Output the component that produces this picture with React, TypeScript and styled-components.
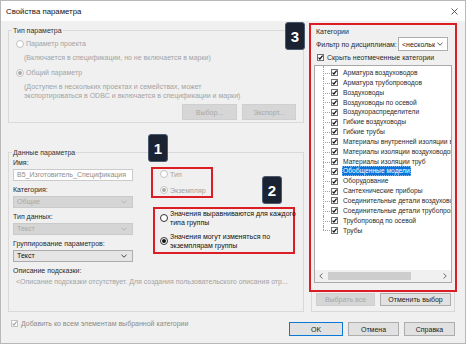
import React from "react";
import styled, { createGlobalStyle, css } from "styled-components";

const RED = "#dc1d25";
const DISABLED = "#a3a3a3";

const categories = [
  "Арматура воздуховодов",
  "Арматура трубопроводов",
  "Воздуховоды",
  "Воздуховоды по осевой",
  "Воздухораспределители",
  "Гибкие воздуховоды",
  "Гибкие трубы",
  "Материалы внутренней изоляции воздуховодов",
  "Материалы изоляции воздуховодов",
  "Материалы изоляции труб",
  "Обобщенные модели",
  "Оборудование",
  "Сантехнические приборы",
  "Соединительные детали воздуховодов",
  "Соединительные детали трубопроводов",
  "Трубопровод по осевой",
  "Трубы",
];
const selectedCategory = "Обобщенные модели";

const GlobalStyle = createGlobalStyle`
  html, body {
    margin: 0;
    padding: 0;
    background: #fff;
  }
  body {
    font-family: "Liberation Sans", Arial, sans-serif;
  }
  * {
    box-sizing: border-box;
  }
`;

function Chevron({ color = "#555" }: { color?: string }) {
  return (
    <svg width="6" height="4" viewBox="0 0 6 4">
      <path d="M0.5 0.8 L3 3.2 L5.5 0.8" fill="none" stroke={color} strokeWidth="0.9" />
    </svg>
  );
}

function CheckBox({ disabled }: { disabled?: boolean }) {
  return (
    <svg width="7" height="7" viewBox="0 0 7 7" style={{ flex: "none" }}>
      <rect x="0.5" y="0.5" width="6" height="6" fill="#fff" stroke={disabled ? "#c4c4c4" : "#707070"} />
      <path
        d="M1.5 3.6 L2.9 5 L5.6 1.7"
        fill="none"
        stroke={disabled ? "#a8a8a8" : "#111"}
        strokeWidth="1.2"
      />
    </svg>
  );
}

export default function App() {
  return (
    <>
      <GlobalStyle />
      <Dialog>
        <TitleBar>
          <span>Свойства параметра</span>
          <svg width="7" height="7" viewBox="0 0 7 7">
            <path d="M0.5 0.5 L6.5 6.5 M6.5 0.5 L0.5 6.5" stroke="#333" strokeWidth="0.8" />
          </svg>
        </TitleBar>

        <Main>
          <LeftColumn>
            <TypeGroup>
              <Legend>Тип параметра</Legend>
              <RadioRow $disabled $indent={3}>
                <Radio $disabled />
                <span>Параметр проекта</span>
              </RadioRow>
              <Hint $top={5}>(Включается в спецификации, но не включается в марки)</Hint>
              <RadioRow $disabled $indent={3} $top={6}>
                <Radio $disabled $checked />
                <span>Общий параметр</span>
              </RadioRow>
              <Hint $top={5}>
                (Доступен в нескольких проектах и семействах, может
                <br />
                экспортироваться в ODBC и включается в спецификации и марки)
              </Hint>
              <ButtonRow>
                <Button $variant="disabled" $w={55} $h={16}>Выбор...</Button>
                <Button $variant="disabled" $w={54} $h={16}>Экспорт...</Button>
              </ButtonRow>
            </TypeGroup>

            <DataGroup>
              <Legend>Данные параметра</Legend>
              <DataGrid>
                <Fields>
                  <Field>
                    <Label>Имя:</Label>
                    <TextInput>B5_Изготовитель_Спецификация</TextInput>
                  </Field>
                  <Field>
                    <Label>Категория:</Label>
                    <Select $disabled>
                      <span>Общие</span>
                      <Chevron color="#b0b0b0" />
                    </Select>
                  </Field>
                  <Field>
                    <Label>Тип данных:</Label>
                    <Select $disabled>
                      <span>Текст</span>
                      <Chevron color="#b0b0b0" />
                    </Select>
                  </Field>
                  <Field>
                    <Label>Группирование параметров:</Label>
                    <Select>
                      <span>Текст</span>
                      <Chevron color="#333" />
                    </Select>
                  </Field>
                </Fields>

                <Options>
                  <InstanceBox>
                    <Badge $x={-5} $y={-35}>1</Badge>
                    <RadioRow $disabled>
                      <Radio $disabled />
                      <span>Тип</span>
                    </RadioRow>
                    <RadioRow $disabled $top={7}>
                      <Radio $disabled $checked />
                      <span>Экземпляр</span>
                    </RadioRow>
                  </InstanceBox>

                  <GroupValuesBox>
                    <Badge $x={107} $y={-33}>2</Badge>
                    <RadioRow>
                      <Radio />
                      <span>
                        Значения выравниваются для каждого
                        <br />
                        типа группы
                      </span>
                    </RadioRow>
                    <RadioRow $top={5}>
                      <Radio $checked />
                      <span>
                        Значения могут изменяться по
                        <br />
                        экземплярам группы
                      </span>
                    </RadioRow>
                  </GroupValuesBox>
                </Options>
              </DataGrid>
              <Label>Описание подсказки:</Label>
              <TooltipText>
                &lt;Описание подсказки отсутствует. Для создания пользовательского описания отр...
              </TooltipText>
            </DataGroup>
          </LeftColumn>

          <RightColumn>
            <CategoryFrame>
              <Badge $x={-26} $y={-3}>3</Badge>
              <Label>Категории</Label>
              <FilterRow>
                <span>Фильтр по дисциплинам:</span>
                <FilterSelect>
                  <FilterValue>&lt;несколько&gt;</FilterValue>
                  <Chevron color="#444" />
                </FilterSelect>
              </FilterRow>
              <CheckRow>
                <CheckBox />
                <span>Скрыть неотмеченные категории</span>
              </CheckRow>

              <TreeBox>
                <TreeList>
                  {categories.map((name) => (
                    <TreeRow key={name}>
                      <CheckBox />
                      <TreeText $selected={name === selectedCategory}>{name}</TreeText>
                    </TreeRow>
                  ))}
                </TreeList>
                <ScrollBar>
                  <ScrollArrow>
                    <svg width="4" height="6" viewBox="0 0 4 6">
                      <path d="M3.5 0.5 L0.8 3 L3.5 5.5" fill="none" stroke="#606060" strokeWidth="0.9" />
                    </svg>
                  </ScrollArrow>
                  <ScrollTrack>
                    <ScrollThumb />
                  </ScrollTrack>
                  <ScrollArrow>
                    <svg width="4" height="6" viewBox="0 0 4 6">
                      <path d="M0.5 0.5 L3.2 3 L0.5 5.5" fill="none" stroke="#606060" strokeWidth="0.9" />
                    </svg>
                  </ScrollArrow>
                </ScrollBar>
              </TreeBox>
            </CategoryFrame>

            <CategoryButtons>
              <Button $variant="disabled" $w={59} $h={13}>Выбрать все</Button>
              <Button $w={71} $h={13}>Отменить выбор</Button>
            </CategoryButtons>
          </RightColumn>
        </Main>

        <Footer>
          <CheckRow $disabled>
            <CheckBox disabled />
            <span>Добавить ко всем элементам выбранной категории</span>
          </CheckRow>
          <DialogButtons>
            <Button $variant="primary" $w={54} $h={14}>OK</Button>
            <Button $w={51} $h={14}>Отмена</Button>
            <Button $w={51} $h={14}>Справка</Button>
          </DialogButtons>
        </Footer>
      </Dialog>
    </>
  );
}

const Dialog = styled.div`
  width: 466px;
  height: 344px;
  border: 1px solid #b8b8b8;
  background: #f0f0f0;

  display: flex;
  flex-direction: column;

  font-size: 7px;
  line-height: 9px;
  color: #2b2b2b;
`;

const TitleBar = styled.div`
  height: 20px;
  flex: none;
  padding: 0 7px 0 5px;
  background: #fff;

  display: flex;
  align-items: center;
  justify-content: space-between;

  font-size: 7.8px;
  color: #111;
`;

const Main = styled.div`
  flex: 1;
  min-height: 0;
  padding: 2px 0 0 7px;

  display: flex;
  gap: 5px;
`;

const LeftColumn = styled.div`
  width: 296px;
  display: flex;
  flex-direction: column;
`;

const GroupBox = styled.fieldset`
  margin: 0;
  min-width: 0;
  border: 1px solid #d9d9d9;
`;

const TypeGroup = styled(GroupBox)`
  margin-top: 2.5px;
  padding: 4.5px 7px 2px 4px;
`;

const DataGroup = styled(GroupBox)`
  flex: 1;
  margin-top: 24.5px;
  padding: 1px 4px 0 4px;
`;

const Legend = styled.legend`
  padding: 0 1px;
  margin-left: -1px;
  line-height: 9px;
  color: #333;
`;

const RadioRow = styled.div<{ $disabled?: boolean; $indent?: number; $top?: number }>`
  display: flex;
  align-items: center;
  gap: 2px;
  margin-left: ${(p) => p.$indent ?? 0}px;
  margin-top: ${(p) => p.$top ?? 0}px;
  color: ${(p) => (p.$disabled ? DISABLED : "#111")};
  white-space: nowrap;
`;

const Radio = styled.span<{ $checked?: boolean; $disabled?: boolean }>`
  flex: none;
  position: relative;
  width: 8px;
  height: 8px;
  border-radius: 50%;
  border: 1px solid ${(p) => (p.$disabled ? "#c2c2c2" : "#333")};
  background: #fff;

  ${(p) =>
    p.$checked &&
    css`
      &::after {
        content: "";
        position: absolute;
        inset: 1px;
        border-radius: 50%;
        background: ${p.$disabled ? "#a9a9a9" : "#111"};
      }
    `}
`;

const Hint = styled.div<{ $top?: number }>`
  margin: ${(p) => p.$top ?? 0}px 0 0 11px;
  color: ${DISABLED};
  white-space: nowrap;
`;

const ButtonRow = styled.div`
  margin-top: 4px;
  display: flex;
  justify-content: flex-end;
  gap: 5px;
`;

const Button = styled.button<{ $variant?: "default" | "disabled" | "primary"; $w: number; $h: number }>`
  width: ${(p) => p.$w}px;
  height: ${(p) => p.$h}px;
  padding: 0;
  flex: none;

  font-family: inherit;
  font-size: 7px;
  line-height: 9px;

  background: ${(p) => (p.$variant === "disabled" ? "#d6d6d6" : "#e1e1e1")};
  color: ${(p) => (p.$variant === "disabled" ? "#a8a8a8" : "#1a1a1a")};
  border: 1px solid
    ${(p) => (p.$variant === "primary" ? "#0a78d4" : p.$variant === "disabled" ? "#cfcfcf" : "#adadad")};
`;

const DataGrid = styled.div`
  display: grid;
  grid-template-columns: 120px 1fr;
  column-gap: 18px;
`;

const Fields = styled.div`
  display: flex;
  flex-direction: column;
`;

const Field = styled.div`
  display: flex;
  flex-direction: column;
  gap: 2px;
  margin-bottom: 4px;
`;

const Label = styled.div`
  line-height: 9px;
  color: #2a2a2a;
  white-space: nowrap;
`;

const TextInput = styled.div`
  height: 12px;
  padding-left: 3px;
  border: 1px solid #cbcbcb;
  background: #fff;
  color: #8e8e8e;
  line-height: 10px;
  white-space: nowrap;
`;

const Select = styled.div<{ $disabled?: boolean }>`
  height: 12px;
  padding: 0 5px 0 3px;

  display: flex;
  align-items: center;
  justify-content: space-between;

  border: 1px solid ${(p) => (p.$disabled ? "#cacaca" : "#acacac")};
  background: ${(p) => (p.$disabled ? "#d5d5d5" : "#e5e5e5")};
  color: ${(p) => (p.$disabled ? "#a9a9a9" : "#111")};
`;

const Options = styled.div`
  padding-top: 9.5px;
  display: flex;
  flex-direction: column;
`;

const Highlight = styled.div`
  position: relative;
  border: 2px solid ${RED};
`;

const InstanceBox = styled(Highlight)`
  width: 62px;
  height: 31px;
  padding: 0.5px 0 0 7px;
`;

const GroupValuesBox = styled(Highlight)`
  width: 142px;
  height: 47px;
  margin: 9px 0 0 2px;
  padding: 0 0 0 5px;
`;

const Badge = styled.div<{ $x: number; $y: number }>`
  position: absolute;
  left: ${(p) => p.$x}px;
  top: ${(p) => p.$y}px;
  width: 20px;
  height: 28px;

  display: flex;
  align-items: center;
  justify-content: center;

  background: #1b2333;
  border: 1px solid #4c5a70;
  border-radius: 3px;

  color: #fff;
  font-family: "Liberation Sans", Arial, sans-serif;
  font-size: 15px;
  font-weight: 700;
`;

const TooltipText = styled.div`
  margin: 2px 0 0 3px;
  color: ${DISABLED};
  white-space: nowrap;
  overflow: hidden;
`;

const RightColumn = styled.div`
  width: 148px;
  display: flex;
  flex-direction: column;
`;

const CategoryFrame = styled(Highlight)`
  height: 269px;
  padding: 1.5px 0 0 5px;
  flex: none;
`;

const FilterRow = styled.div`
  margin-top: 1.5px;
  padding-right: 7px;

  display: flex;
  align-items: center;
  justify-content: space-between;

  color: #2a2a2a;
  white-space: nowrap;
`;

const FilterSelect = styled.div`
  width: 50px;
  height: 14px;
  padding: 0 4px 0 3px;

  display: flex;
  align-items: center;
  gap: 2px;

  background: #fff;
  border: 1px solid #acacac;
  color: #222;
`;

const FilterValue = styled.span`
  flex: 1;
  overflow: hidden;
  white-space: nowrap;
`;

const CheckRow = styled.div<{ $disabled?: boolean }>`
  margin: 1.5px 0 0 1px;

  display: flex;
  align-items: center;
  gap: 3px;

  color: ${(p) => (p.$disabled ? "#8a8a8a" : "#2a2a2a")};
  white-space: nowrap;
`;

const TreeBox = styled.div`
  width: 138px;
  height: 218px;
  margin: 3.5px 0 0 -2px;

  display: flex;
  flex-direction: column;

  background: #fff;
  border: 1px solid #a9a9a9;
`;

const TreeList = styled.div`
  flex: 1;
  min-height: 0;
  padding-top: 2px;
  overflow: hidden;
  font-size: 6.7px;
`;

const TreeRow = styled.div`
  position: relative;
  height: 9.85px;
  padding-left: 16px;

  display: flex;
  align-items: center;

  white-space: nowrap;
  color: #2b2b2b;

  &::before {
    content: "";
    position: absolute;
    left: 8px;
    top: 0;
    bottom: 0;
    border-left: 1px dotted #a0a0a0;
  }

  &::after {
    content: "";
    position: absolute;
    left: 8px;
    top: 50%;
    width: 7px;
    border-top: 1px dotted #a0a0a0;
  }

  &:first-child::before {
    top: -2px;
  }

  &:last-child::before {
    bottom: 50%;
  }
`;

const TreeText = styled.span<{ $selected?: boolean }>`
  margin-left: 4px;
  padding: 0 1px;
  line-height: 9.85px;

  ${(p) =>
    p.$selected &&
    css`
      background: #0a74da;
      color: #fff;
      outline: 1px dotted #7fb8ee;
      outline-offset: -1px;
    `}
`;

const ScrollBar = styled.div`
  height: 12px;
  flex: none;
  display: flex;
  background: #f0f0f0;
`;

const ScrollArrow = styled.div`
  width: 12px;
  display: flex;
  align-items: center;
  justify-content: center;
`;

const ScrollTrack = styled.div`
  flex: 1;
  padding: 2px 1px;
`;

const ScrollThumb = styled.div`
  width: 83px;
  height: 100%;
  background: #cdcdcd;
`;

const CategoryButtons = styled.div`
  flex: 1;
  margin: 0 2px;
  padding: 1px 0 0 4px;

  display: flex;
  align-items: flex-start;
  gap: 5px;

  border: 1px solid #d9d9d9;
  border-top: none;
`;

const Footer = styled.div`
  height: 31px;
  flex: none;
  padding: 0 10px 0 9px;

  display: flex;
  align-items: flex-start;

  ${CheckRow} {
    margin-top: 7px;
  }
`;

const DialogButtons = styled.div`
  margin: 10px 0 0 auto;
  display: flex;
  gap: 5px;
`;
